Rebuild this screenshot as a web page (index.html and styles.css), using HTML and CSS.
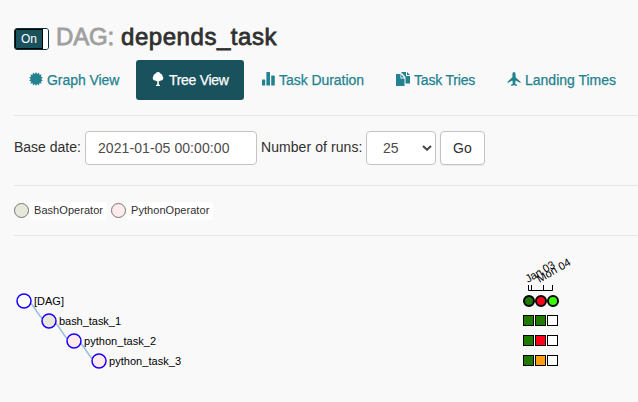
FILE: index.html
```html
<!DOCTYPE html>
<html lang="en">
<head>
<meta charset="utf-8">
<title>depends_task</title>
<link rel="stylesheet" href="styles.css">
</head>
<body>
<main class="page">
  <header class="title">
    <span class="toggle"><span class="toggle-on">On</span><span class="toggle-handle"></span></span>
    <h1><span class="muted">DAG:</span> <span class="name">depends_task</span></h1>
  </header>
  <nav class="tabs">
    <a class="tab graph"><svg class="icon" viewBox="0 0 14 14"><path d="M7 0 8.100 1.900 10.100.6 10.300 2.800 12.700 2.600 11.800 4.600 13.900 5.600 12.200 7 13.900 8.400 11.800 9.400 12.700 11.400 10.300 11.200 10.100 13.400 8.100 12.100 7 14 5.900 12.100 3.900 13.400 3.700 11.200 1.300 11.400 2.200 9.400.1 8.400 1.800 7 .1 5.600 2.200 4.600 1.300 2.600 3.700 2.800 3.900.6 5.900 1.900Z"/></svg><span>Graph View</span></a>
    <a class="tab tree active"><svg class="icon" viewBox="0 0 14 14"><path d="M7 0Q9 0 9.600 1.700 11.600 2 11.500 4 12.600 5 12.200 6.700 11.700 8.500 9.700 8.600 8.600 9.700 7.800 9V12.500L9 13V14H5V13L6.200 12.500V9Q5.400 9.700 4.300 8.600 2.300 8.500 1.800 6.700 1.400 5 2.500 4 2.400 2 4.400 1.700 5 0 7 0Z"/></svg><span>Tree View</span></a>
    <a class="tab duration"><svg class="icon" viewBox="0 0 14 14"><rect x="1" y="7.500" width="3.200" height="6" rx=".5"/><rect x="5.400" y="0" width="3.600" height="13.500" rx=".6"/><rect x="10.200" y="3.500" width="3.600" height="10" rx=".6"/></svg><span>Task Duration</span></a>
    <a class="tab tries"><svg class="icon" viewBox="0 0 14 14"><path d="M0 2H4.500V6.500H8.500V14H0ZM5.300 2.500 8 5.500H5.300ZM5.500 0H10V4H14V11.500H9.500V5.300L6.500 1.500H5.500ZM11 0 14 3H11Z"/></svg><span>Task Tries</span></a>
    <a class="tab landing"><svg class="icon" viewBox="0 0 14 14"><path d="M7 0C8 0 8.600 1.200 8.600 2.500V5.300L13.500 9.800V11L8.600 8.600 8.200 11.500 10 13V14L7 13.200 4 14V13L5.800 11.500 5.400 8.600.5 11V9.800L5.400 5.300V2.500C5.400 1.200 6 0 7 0Z"/></svg><span>Landing Times</span></a>
  </nav>
  <form class="filters">
    <label class="date-label">Base date:</label>
    <span class="control date">2021-01-05 00:00:00</span>
    <label class="runs-label">Number of runs:</label>
    <span class="control runs">25<svg class="caret" viewBox="0 0 10 6"><path d="M1 1 5 4.700 9 1"/></svg></span>
    <span class="control go">Go</span>
  </form>
  <section class="legend">
    <span class="dot bash"></span><span class="tag bash-tag">BashOperator</span>
    <span class="dot python"></span><span class="tag">PythonOperator</span>
  </section>
  <svg class="chart" width="638" height="166" viewBox="0 236 638 166">
    <g class="link">
      <path d="M24 301C36.500 301 36.500 321 49 321"/>
      <path d="M49 321C61.500 321 61.500 341 74 341"/>
      <path d="M74 341C86.500 341 86.500 361 99 361"/>
    </g>
    <g class="node">
      <circle cx="24" cy="301" r="7" fill="#fff"/>
      <circle cx="49" cy="321" r="7" fill="#e8e7dc"/>
      <circle cx="74" cy="341" r="7" fill="#ffebeb"/>
      <circle cx="99" cy="361" r="7" fill="#ffebeb"/>
    </g>
    <g class="label">
      <text x="34" y="305" textLength="30">[DAG]</text>
      <text x="59" y="325" textLength="62">bash_task_1</text>
      <text x="84" y="345" textLength="72">python_task_2</text>
      <text x="109" y="365" textLength="72">python_task_3</text>
      <text transform="translate(528 283) rotate(-30)" textLength="32">Jan 03</text>
      <text transform="translate(539.500 283) rotate(-30)" textLength="37">Mon 04</text>
    </g>
    <path class="axis" d="M528.500 285V290.500H552.500V285M531.500 285V290M543.500 285V290"/>
    <g class="run">
      <circle cx="529" cy="301" r="5" fill="#1f7a00"/>
      <circle cx="541" cy="301" r="5" fill="#ff0019"/>
      <circle cx="553" cy="301" r="5" fill="#37ff00"/>
    </g>
    <g class="task">
      <rect x="523.500" y="315.500" width="10" height="10" fill="#1f7a00"/>
      <rect x="535.500" y="315.500" width="10" height="10" fill="#1f7a00"/>
      <rect x="547.500" y="315.500" width="10" height="10" fill="#fff"/>
      <rect x="523.500" y="335.500" width="10" height="10" fill="#1f7a00"/>
      <rect x="535.500" y="335.500" width="10" height="10" fill="#ff0019"/>
      <rect x="547.500" y="335.500" width="10" height="10" fill="#fff"/>
      <rect x="523.500" y="355.500" width="10" height="10" fill="#1f7a00"/>
      <rect x="535.500" y="355.500" width="10" height="10" fill="#ff9e12"/>
      <rect x="547.500" y="355.500" width="10" height="10" fill="#fff"/>
    </g>
  </svg>
</main>
</body>
</html>
```

FILE: styles.css
```css
* { box-sizing: border-box; }
body {
  margin: 0;
  overflow: hidden;
  background: #f9f9f9;
  color: #303030;
  font: 14px/20px "Liberation Sans", Arial, sans-serif;
}
.page { width: 638px; height: 402px; overflow: hidden; white-space: nowrap; }
.title { display: flex; height: 60px; padding: 22px 0 0 14px; }
.toggle {
  display: flex;
  width: 35px;
  height: 22px;
  margin-top: 6px;
  border: 1px solid #062f38;
  border-radius: 3px;
  overflow: hidden;
  background: #fff;
}
.toggle-on {
  width: 28px;
  border: 1px solid #000;
  background: #19525c;
  color: #fff;
  font-size: 12px;
  line-height: 18px;
  text-align: center;
}
.toggle-handle { flex: 1; background: #fff; }
h1 {
  display: flex;
  gap: 6px;
  margin: 0 0 0 7px;
  font-size: 24px;
  line-height: 30px;
  font-weight: 400;
  -webkit-text-stroke: .8px currentColor;
}
.muted { width: 59px; color: #a0a0a0; letter-spacing: -.2px; }
.name { letter-spacing: .55px; }
.tabs { display: flex; height: 55px; padding-left: 14px; }
.tab {
  display: flex;
  flex: none;
  gap: 4px;
  height: 40px;
  padding: 10px 0 10px 15px;
  border-radius: 3px;
  color: #248290;
  letter-spacing: -.05px;
  -webkit-text-stroke: .25px currentColor;
}
.tab.active { background: #19525c; color: #fff; letter-spacing: -.3px; }
.icon { flex: none; width: 14px; height: 14px; margin-top: 2px; fill: currentColor; stroke: none; }
.graph { width: 122px; }
.tree { width: 108px; }
.duration { width: 133px; padding-left: 17px; }
.tries { width: 113px; padding-left: 19px; letter-spacing: -.2px; }
.landing { width: 130px; padding-left: 17px; letter-spacing: 0; }
.filters {
  display: flex;
  height: 70px;
  margin-left: 14px;
  padding-top: 15px;
  border-top: 1px solid #e6e6e6;
}
.filters label { flex: none; margin-top: 6px; }
.date-label { width: 71px; }
.runs-label { width: 105px; letter-spacing: .07px; }
.control {
  flex: none;
  height: 34px;
  padding: 6px 12px;
  border: 1px solid #c3c3c3;
  border-radius: 4px;
  background: #fff;
  color: #4c4c4c;
}
.date { width: 172px; margin-right: 4px; letter-spacing: .08px; }
.runs { display: flex; justify-content: space-between; width: 70px; margin-right: 4px; padding: 6px 3px 6px 16px; }
.caret { width: 10px; height: 6px; margin-top: 7px; fill: none; stroke: #444; stroke-width: 2; }
.go { width: 45px; color: #303030; box-shadow: 0 1px 1px #0001; }
.legend {
  display: flex;
  align-items: center;
  height: 51px;
  margin-left: 14px;
  border: solid #e6e6e6;
  border-width: 1px 0;
  font-size: 11px;
}
.dot { width: 15px; height: 15px; border: 1px solid #777; border-radius: 50%; }
.bash { background: #e8e7dc; }
.python { background: #ffebeb; }
.tag { height: 18px; padding: 0 4px; margin-left: 1px; border-radius: 4px; background: #fff; line-height: 17px; letter-spacing: .05px; }
.bash-tag { width: 77px; margin-right: 4px; }
.chart { display: block; }
.link path { fill: none; stroke: #9bbfdd; stroke-width: 1.5; }
.node circle { stroke: #1a00ff; stroke-width: 1.5; }
.label { font-size: 11px; fill: #000; }
.axis { fill: none; stroke: #000; stroke-width: 1; }
.run circle { stroke: #000; stroke-width: 2; }
.task rect { stroke: #000; stroke-width: 1; }
```
